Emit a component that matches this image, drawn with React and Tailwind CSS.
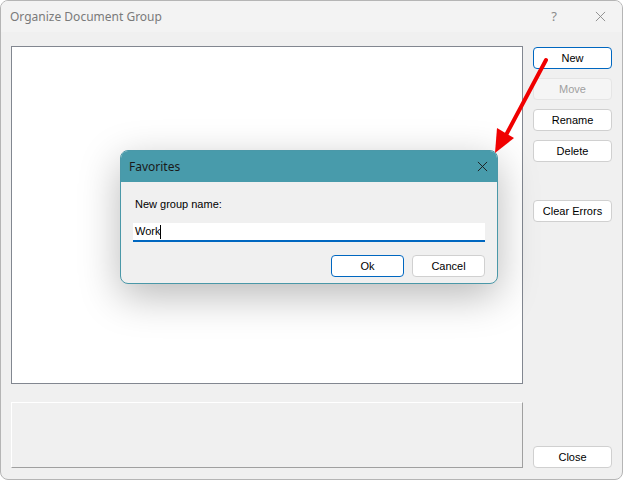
import React from 'react';

const font = { fontFamily: '"Noto Sans", "Open Sans", sans-serif' };
const winForms = { fontFamily: '"Liberation Sans", Arial, sans-serif' };

function WinButton({ children, focused, disabled, className = '' }) {
  let look = 'bg-white border-[#d0d0d0] text-black';
  if (focused) look = 'bg-white border-[#0067c0] text-black';
  if (disabled) look = 'bg-[#f5f5f5] border-[#e5e5e5] text-[#a0a0a0]';
  return (
    <div
      className={`h-[22px] rounded-[4px] border flex items-center justify-center text-[11px] leading-none ${look} ${className}`}
      style={winForms}
    >
      {children}
    </div>
  );
}

function CloseGlyph({ size = 12, color = '#333', strokeWidth = 1 }) {
  return (
    <svg width={size} height={size} viewBox="0 0 12 12">
      <path d="M1 1 L11 11 M11 1 L1 11" stroke={color} strokeWidth={strokeWidth} fill="none" />
    </svg>
  );
}

export default function App() {
  return (
    <div className="w-[623px] h-[481px] bg-white relative overflow-hidden" style={font}>
      {/* main window */}
      <div className="w-[623px] h-[480px] border border-[#b5b5b5] rounded-[8px] bg-[#f0f0f0] flex flex-col overflow-hidden">
        <div className="h-[31px] bg-[#f3f3f3] flex items-center pl-[9px] shrink-0">
          <span className="text-[12px] text-[#7a7a7a]">Organize Document Group</span>
          <div className="ml-auto flex items-center">
            <span className="text-[13px] text-[#8a8a8a] mr-[38px]">?</span>
            <div className="mr-[16px] flex items-center">
              <CloseGlyph size={11} color="#8a8a8a" />
            </div>
          </div>
        </div>
        <div className="flex flex-1 pt-[14px] pl-[10px] pb-[11px]">
          <div className="w-[512px] flex flex-col">
            <div className="h-[338px] bg-white border border-[#828790]" />
            <div className="mt-[18px] h-[66px] bg-[#f0f0f0] border border-t-white border-l-white border-r-[#a0a0a0] border-b-[#a0a0a0]" />
          </div>
          <div className="ml-[10px] w-[79px] flex flex-col pt-[1px]">
            <WinButton focused>New</WinButton>
            <WinButton disabled className="mt-[9px]">Move</WinButton>
            <WinButton className="mt-[9px]">Rename</WinButton>
            <WinButton className="mt-[9px]">Delete</WinButton>
            <WinButton className="mt-[38px]">Clear Errors</WinButton>
            <WinButton className="mt-auto">Close</WinButton>
          </div>
        </div>
      </div>

      {/* Favorites dialog */}
      <div className="absolute left-[120px] top-[150px] w-[378px] h-[134px] rounded-[8px] border border-[#4a98a8] bg-[#f0f0f0] overflow-hidden shadow-[0_12px_40px_rgba(0,0,0,0.28)] flex flex-col">
        <div className="h-[31px] bg-[#489bab] flex items-center pl-[8px] pr-[9px] shrink-0">
          <span className="text-[12px] text-[#1a1a1a]">Favorites</span>
          <div className="ml-auto flex items-center">
            <CloseGlyph size={11} color="#1a1a1a" />
          </div>
        </div>
        <div className="flex flex-col px-[12px] pt-[15px]" style={winForms}>
          <span className="text-[11px] text-black ml-[2px] leading-[14px]">New group name:</span>
          <div className="mt-[12px] h-[19px] bg-white border-b-2 border-[#0067c0] flex items-center pl-[2px]">
            <span className="text-[11px] text-black leading-none">Work</span>
            <span className="w-px h-[14px] bg-black" />
          </div>
          <div className="flex justify-end mt-[13px] gap-[8px]">
            <WinButton focused className="w-[73px]">Ok</WinButton>
            <WinButton className="w-[73px]">Cancel</WinButton>
          </div>
        </div>
      </div>

      {/* red arrow annotation */}
      <svg className="absolute left-0 top-0 pointer-events-none" width="623" height="481">
        <line x1="546" y1="60" x2="505" y2="137" stroke="#f00000" strokeWidth="4" strokeLinecap="round" />
        <polygon points="495,153 497,128 514,138" fill="#f00000" />
      </svg>
    </div>
  );
}
